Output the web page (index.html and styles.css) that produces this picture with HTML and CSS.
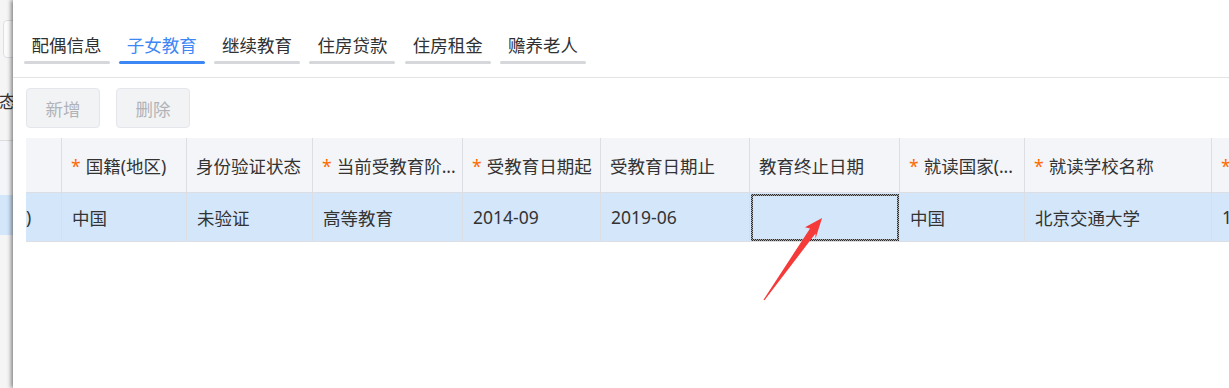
FILE: index.html
```html
<!DOCTYPE html>
<html lang="zh-CN">
<head>
<meta charset="utf-8">
<title>专项附加扣除 - 子女教育</title>
<link rel="stylesheet" href="styles.css">
</head>
<body>
<div class="screen">
  <div class="backdrop">
    <div class="bd-input"></div>
    <div class="bd-label">态</div>
    <div class="bd-table">
      <div class="bd-head"></div>
      <div class="bd-row"></div>
    </div>
  </div>

  <div class="drawer">
    <div class="tabs">
      <div class="tab">配偶信息</div>
      <div class="tab active">子女教育</div>
      <div class="tab">继续教育</div>
      <div class="tab">住房贷款</div>
      <div class="tab">住房租金</div>
      <div class="tab">赡养老人</div>
    </div>

    <div class="toolbar">
      <button class="btn" disabled>新增</button>
      <button class="btn" disabled>删除</button>
    </div>

    <div class="grid">
      <table>
        <colgroup>
          <col class="c-idx">
          <col class="c-125">
          <col class="c-126">
          <col class="c-150">
          <col class="c-138">
          <col class="c-149">
          <col class="c-150">
          <col class="c-125">
          <col class="c-187">
          <col class="c-160">
        </colgroup>
        <thead>
          <tr>
            <th></th>
            <th><span class="req">*</span>国籍(地区)</th>
            <th>身份验证状态</th>
            <th><span class="req">*</span>当前受教育阶...</th>
            <th><span class="req">*</span>受教育日期起</th>
            <th>受教育日期止</th>
            <th>教育终止日期</th>
            <th><span class="req">*</span>就读国家(...</th>
            <th><span class="req">*</span>就读学校名称</th>
            <th><span class="req">*</span>扣除比例</th>
          </tr>
        </thead>
        <tbody>
          <tr class="selected">
            <td class="cut">0)</td>
            <td>中国</td>
            <td>未验证</td>
            <td>高等教育</td>
            <td>2014-09</td>
            <td>2019-06</td>
            <td class="focus"></td>
            <td>中国</td>
            <td>北京交通大学</td>
            <td>100%</td>
          </tr>
        </tbody>
      </table>
    </div>
  </div>

  <svg class="arrow" width="1229" height="388" viewBox="0 0 1229 388" aria-hidden="true">
    <polygon transform="translate(764 300) rotate(-54.7)"
      points="0,-0.6 85,-3.8 83,-8.5 100.5,0 80,6.5 84,3.6 0,0.6" fill="#f53a3a"/>
  </svg>
</div>
</body>
</html>
```

FILE: styles.css
```css
html, body {
  margin: 0;
  height: 100%;
  overflow: hidden;
  background: #fff;
}

body {
  font-family: "Noto Sans", "Noto Sans CJK SC", sans-serif;
  font-size: 17.5px;
  color: #333;
}

.screen {
  position: relative;
  display: flex;
  height: 388px;
}

/* page underneath the drawer */
.backdrop {
  flex: none;
  width: 13px;
  overflow: hidden;
  background: #f5f5f5;
}

.bd-input {
  margin: 20px 0 0 3px;
  width: 100px;
  height: 38px;
  box-sizing: border-box;
  border: 1px solid #dcdfe4;
  border-radius: 4px;
  background: #fbfbfb;
}

.bd-label {
  margin: 31px 0 0 -1px;
  line-height: 24px;
  white-space: nowrap;
}

.bd-table {
  margin-top: 27px;
  border-top: 1px solid #dcdcdc;
}

.bd-head {
  height: 54px;
  background: #f4f5f8;
}

.bd-row {
  height: 40px;
  background: #d3e6fa;
}

/* drawer */
.drawer {
  position: relative;
  z-index: 1;
  flex: 1;
  min-width: 0;
  overflow: hidden;
  background: #fff;
  box-shadow: -2px 0 4px rgba(0, 0, 0, 0.45);
}

.tabs {
  display: flex;
  gap: 9.3px;
  padding: 33px 10px 13px 10.5px;
  border-bottom: 1px solid #e4e4e4;
}

.tab {
  width: 86px;
  text-align: center;
  line-height: 24px;
  color: #303133;
  white-space: nowrap;
}

.tab::after {
  content: "";
  display: block;
  height: 3px;
  margin-top: 4px;
  border-radius: 2px;
  background: #d6d7db;
}

.tab.active {
  color: #3d87f5;
}

.tab.active::after {
  background: #3d87f5;
}

.toolbar {
  display: flex;
  gap: 16px;
  padding: 10px 13px;
}

.btn {
  width: 74px;
  height: 40px;
  box-sizing: border-box;
  border: 1px solid #e4e6eb;
  border-radius: 4px;
  background: #f2f3f5;
  color: #b1b3b8;
  font: inherit;
  padding: 0;
}

.grid {
  margin-left: 13px;
  overflow: hidden;
}

table {
  width: 1346px;
  table-layout: fixed;
  border-collapse: separate;
  border-spacing: 0;
}

.c-idx { width: 36px; }
.c-125 { width: 125px; }
.c-126 { width: 126px; }
.c-138 { width: 138px; }
.c-149 { width: 149px; }
.c-150 { width: 150px; }
.c-187 { width: 187px; }
.c-160 { width: 160px; }

th, td {
  box-sizing: border-box;
  border-right: 1px solid #dcdee3;
  border-bottom: 1px solid #dcdee3;
  text-align: left;
  font-weight: normal;
  white-space: nowrap;
  overflow: hidden;
}

th {
  height: 55px;
  padding: 0 9px;
  background: #f4f5f8;
  color: #333;
}

td {
  height: 49px;
  padding: 0 10px;
  background: #d3e6fa;
  color: #333;
}

.req {
  color: #ff6a00;
  margin-right: 5px;
}

td.cut {
  padding: 0;
  text-indent: -10px;
  overflow: visible;
}

td.focus {
  position: relative;
}

td.focus::after {
  content: "";
  position: absolute;
  inset: 1px 0 0 1px;
  padding: 2px;
  background: repeating-conic-gradient(#2b2b2b 0 25%, #a9a9a9 0 50%) 0 0 / 2px 2px;
  -webkit-mask: linear-gradient(#000 0 0) content-box, linear-gradient(#000 0 0);
  -webkit-mask-composite: xor;
  mask-composite: exclude;
  box-sizing: border-box;
}

.arrow {
  position: absolute;
  left: 0;
  top: 0;
  z-index: 2;
  pointer-events: none;
}
```
